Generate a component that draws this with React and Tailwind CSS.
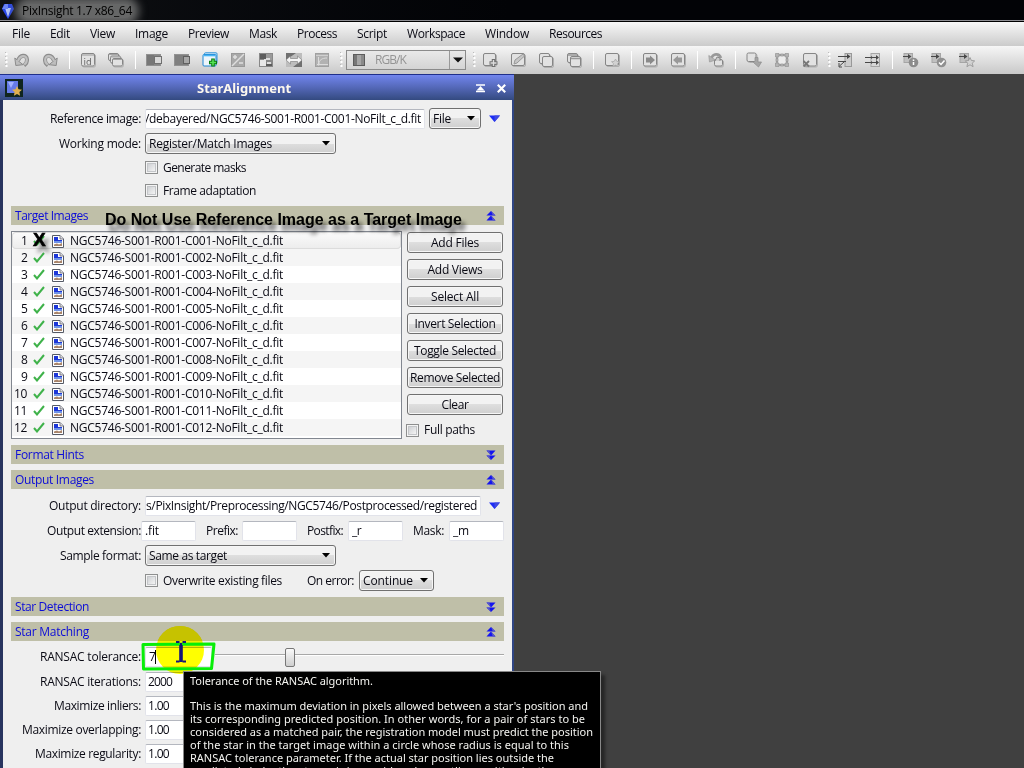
import React, { useLayoutEffect, useRef } from "react";

/* Text run spaced to occupy a given width in pixels. */
function T({ w, children, className = "" }) {
  const ref = useRef(null);
  useLayoutEffect(() => {
    const el = ref.current;
    el.style.letterSpacing = "0px";
    const natural = el.getBoundingClientRect().width;
    el.style.letterSpacing = `${(w - natural) / children.length}px`;
  }, [w, children]);
  return (
    <span ref={ref} className={`inline-block whitespace-pre shrink-0 ${className}`}>
      {children}
    </span>
  );
}

const MENU = [
  ["File", 18], ["Edit", 20], ["View", 25], ["Image", 33], ["Preview", 41], ["Mask", 28],
  ["Process", 40], ["Script", 30], ["Workspace", 58], ["Window", 44], ["Resources", 53],
];

const sheet = (x, y, w, h, key) => (
  <g key={key}>
    <rect x={x + 1} y={y + 1} width={w} height={h} rx="1.5" fill="none" stroke="#b0b0b0" />
    <rect x={x} y={y} width={w} height={h} rx="1.5" fill="#e2e2e2" stroke="#868686" />
  </g>
);
const UNDO = (
  <g>
    <path d="M4 8.500C6 2.500 12.500 2 13 7.500c.2 2.500-1 4.500-3 6" fill="none" stroke="#8c8c8c" strokeWidth="4" />
    <path d="M.8 6l1 7.500 7.200-.8z" fill="#bdbdbd" stroke="#8c8c8c" strokeLinejoin="round" />
    <path d="M4 9C6 3 12.500 2.500 12.800 7.500c.1 2.300-1 4-2.600 5.200" fill="none" stroke="#c0c0c0" strokeWidth="2.200" />
  </g>
);

const ICONS = {
  undo: UNDO,
  redo: <g transform="translate(16 0) scale(-1 1)">{UNDO}</g>,
  id: (
    <g>
      {sheet(1.500, 1.500, 13, 12.500)}
      <path d="M2 3h12" stroke="#999" />
      <text x="3.400" y="12.500" fontSize="9" fill="#666" fontFamily="DejaVu Sans">id</text>
    </g>
  ),
  copies: <g>{sheet(0.500, 1.500, 10, 7)}{sheet(2.500, 4, 10, 7)}{sheet(4.500, 6.500, 10, 7.500)}<path d="M1 2.500h9M3 5h9M5 7.500h9" stroke="#a5a5a5" /></g>,
  monoA: <g><rect x=".5" y="2.500" width="14" height="11" fill="#888" stroke="#909090" /><rect x="1" y="3" width="7" height="10" fill="#777" /><rect x="8.500" y="4.500" width="7" height="7" fill="#d8d8d8" stroke="#707070" /></g>,
  monoB: <g><rect x=".5" y="2.500" width="14" height="11" fill="#808080" stroke="#929292" /><rect x="9.500" y="4.500" width="6" height="7" fill="#a8a8a8" stroke="#606060" /></g>,
  newwin: (
    <g>
      <rect x="2.500" y=".8" width="12.500" height="11" rx="1" fill="#d6ebfa" stroke="#2d91d8" />
      <rect x="1" y="2.500" width="13" height="11.500" rx="1" fill="#edf5fb" stroke="#1f86d2" />
      <path d="M1.500 3.500h12" stroke="#48b5f5" strokeWidth="1.600" />
      <path d="M11 6.500v8M7 10.500h8" stroke="#087a12" strokeWidth="3.600" />
      <path d="M11 7.500v6M8 10.500h6" stroke="#55e355" strokeWidth="1.600" />
    </g>
  ),
  diag: <g><rect x="1.500" y="1.500" width="13" height="13" fill="#a9a9a9" stroke="#999" /><path d="M2 14L14 2" stroke="#dedede" strokeWidth="1.500" /><path d="M3 5h4M5 3v4M9 11h4" stroke="#e0e0e0" strokeWidth="1.500" fill="none" /></g>,
  blocks: <g><rect x="1.500" y="1.500" width="13" height="13" fill="#888" stroke="#888" /><path d="M2 8h6v6H2z" fill="#e8e8e8" /><path d="M8 2h6v6H8z" fill="#9a9a9a" /><path d="M6 6h6v2H6zM9 10h4v2H9z" fill="#ddd" /><path d="M2 2h6v5H2zM8 12h6v2H8z" fill="#5c5c5c" /></g>,
  expand: <g><rect x="0" y="1" width="16" height="14" fill="#bdbdbd" /><path d="M0 1h10L0 8zM16 15H7l9-7z" fill="#707070" /><path d="M0 8l4.500-4v2.500h7V4L16 8l-4.500 4V9.500h-7V12z" fill="#f5f5f5" stroke="#777" strokeWidth=".6" /></g>,
  curve: <g><rect x="1.500" y="1.500" width="13" height="13" fill="#b2b2b2" stroke="#a0a0a0" /><path d="M2 3.500h12" stroke="#d0d0d0" /><path d="M4.500 5v8.500M3 12.500h11M5 12c0-4 3-6 8-6" stroke="#dcdcdc" fill="none" /></g>,
  sheetPlus: <g>{sheet(1.500, 1.500, 12, 12)}<path d="M11.500 7v8M7.500 11h8" stroke="#707070" strokeWidth="3.500" /><path d="M11.500 8v6M8.500 11h6" stroke="#ddd" strokeWidth="1.400" /></g>,
  sheetPen: <g>{sheet(1.500, 1.500, 13, 12)}<path d="M4 12l1-4 8-6 1.500 2-7.500 7z" fill="#c6c6c6" stroke="#999" /></g>,
  twoSheets: <g>{sheet(1.500, 1.500, 10, 10)}{sheet(4.500, 4.500, 10, 10)}</g>,
  twoWins: <g>{sheet(1.500, 1.500, 10, 9)}{sheet(4.500, 4.500, 10, 10)}<path d="M2 3h9M5 6.500h9" stroke="#999" strokeWidth="1.500" /></g>,
  sheetStar: <g>{sheet(1.500, 1.500, 13, 12)}<path d="M11.500 7l1.300 2.400 2.700.3-2 1.900.6 2.900-2.600-1.300-2.600 1.300.6-2.900-2-1.900 2.700-.3z" fill="#d2d2d2" stroke="#aaa" strokeWidth=".8" /></g>,
  right: <g>{sheet(1.500, 1.500, 13, 12.500)}<path d="M4 5.500h4V3.500L13 8l-5 4.500v-2H4z" fill="#8a8a8a" /></g>,
  left: <g>{sheet(1.500, 1.500, 13, 12.500)}<path d="M12 5.500H8V3.500L3 8l5 4.500v-2h4z" fill="#999" /></g>,
  revert: <g><path d="M3 7c2-6 8-6 10-1" fill="none" stroke="#999" strokeWidth="2.600" /><path d="M.8 3.500l.7 6.500 6-2z" fill="#b5b5b5" stroke="#999" strokeWidth=".7" />{sheet(6.500, 7.500, 8, 6.500)}<path d="M7 9l2-4 3 1v3" fill="#ccc" stroke="#888" /></g>,
  dragDown: <g>{sheet(1, 1, 9, 8.500)}<path d="M9 5.500h3V10h3.500l-3 5-5-4.500L9 9z" fill="#a5a5a5" stroke="#909090" strokeWidth=".8" /></g>,
  handles: <g><rect x="3" y="3" width="10" height="10" fill="#ececec" stroke="#a8a8a8" strokeWidth="2" /><path d="M1.500 1.500h3.500v3.500H1.500zM11 1.500h3.500v3.500H11zM1.500 11h3.500v3.500H1.500zM11 11h3.500v3.500H11zM6.500 2h3v2h-3zM6.500 12h3v2h-3zM2 6.500h2v3H2zM12 6.500h2v3h-2z" fill="#b5b5b5" stroke="#939393" strokeWidth=".7" /></g>,
  sheetX: <g>{sheet(1.500, 1.500, 13, 12.500)}<path d="M1.500 9l5.500 5.500M7 9l-5.500 5.500" stroke="#777" strokeWidth="1.800" /></g>,
  arrowsA: <g><rect x="8" y="1.500" width="6.500" height="13" fill="#ccc" stroke="#999" /><path d="M1 4.500h10M1 9.500h8M7 10L2.500 14M2 11v4h3" stroke="#484848" fill="none" /><path d="M10 2l3.500 2.500L10 7z" fill="#444" /></g>,
  arrowsB: <g><rect x="6" y="1.500" width="8.500" height="13" fill="#d8d8d8" stroke="#a5a5a5" /><path d="M0 5.500h12M0 10.500h12" stroke="#484848" /><path d="M11 3L14 5.500 11 8zM11 8l3 2.500L11 13zM6 4L8 5.500 6 7zM6 9L8 10.500 6 12z" fill="#484848" /></g>,
};
const infoBase = (
  <g>
    <rect x="1" y="1.500" width="8.500" height="9" fill="#c0c0c0" stroke="#a5a5a5" />
    <path d="M0 4.500h6" stroke="#484848" />
    <path d="M5 2l3.500 2.500L5 7z" fill="#484848" />
  </g>
);
ICONS.info = <g>{infoBase}<circle cx="10.500" cy="10.500" r="4.800" fill="#8c8c8c" /><path d="M10.500 7.500v1.500M10.500 10v3" stroke="#fff" strokeWidth="1.500" /></g>;
ICONS.ok = <g>{infoBase}<circle cx="10.500" cy="10.500" r="4.800" fill="#909090" /><path d="M8 10.500l2 2 3.500-4" stroke="#fff" strokeWidth="1.500" fill="none" /></g>;
ICONS.star = <g>{infoBase}<path d="M11 5.500l1.400 3 3.300.3-2.400 2.400.8 3.500-3.100-1.900L7.900 14.700l.8-3.500L6.300 8.800l3.300-.3z" fill="#d2d2d2" stroke="#909090" strokeWidth=".8" /></g>;

function Tool({ name }) {
  return (
    <div className="flex w-7 shrink-0 items-center justify-center">
      <svg width="16" height="16" viewBox="0 0 16 16">{ICONS[name]}</svg>
    </div>
  );
}
const Sep = () => (
  <div className="flex w-2.5 shrink-0 items-center justify-center pl-px">
    <div className="h-[18px] w-px bg-white" />
  </div>
);
const Grip = ({ className = "w-2.5" }) => (
  <div className={`flex shrink-0 items-center justify-center ${className}`}>
    <svg width="3" height="16"><path d="M1.500 1v15" stroke="#fff" strokeWidth="2" strokeDasharray="2 2" /><path d="M.5 0v15" stroke="#bbb" strokeDasharray="1 3" /></svg>
  </div>
);
const Tools = ({ names }) => names.map((n) => <Tool key={n} name={n} />);

function Toolbar() {
  return (
    <div className="flex h-7 items-stretch bg-linear-to-b from-[#f6f6f6] to-[#c9c9c9]">
      <Grip className="w-2 pl-1" />
      <Tools names={["undo", "redo"]} />
      <Sep />
      <Tools names={["id", "copies"]} />
      <Sep />
      <Tools names={["monoA", "monoB", "newwin", "diag", "blocks", "expand", "curve"]} />
      <Grip />
      <div className="mt-1 flex h-5 w-[120px] shrink-0 items-center border border-[#8b8b8b] bg-linear-to-b from-[#e9e9e9] to-[#d4d4d4]">
        <div className="ml-1.5 flex h-3 w-3 border border-[#5c5c5c] bg-[#8a8a8a]">
          <div className="w-[3px] bg-[#777]" />
          <div className="w-[4px] bg-[#a5a5a5]" />
        </div>
        <div className="ml-2.5 flex-1 text-[#949494]"><T w={31}>RGB/K</T></div>
        <div className="flex h-full w-4 items-center justify-center border-l border-[#999]">
          <svg width="10" height="6"><path d="M0 .5h10L5 5.500z" fill="#111" /></svg>
        </div>
      </div>
      <Grip className="w-2.5 pl-1.5" />
      <Tools names={["sheetPlus", "sheetPen", "twoSheets", "twoWins"]} />
      <Sep />
      <Tool name="sheetStar" />
      <Sep />
      <Tools names={["right", "left"]} />
      <Sep />
      <Tool name="revert" />
      <Sep />
      <Tools names={["dragDown", "handles", "sheetX"]} />
      <Grip className="w-[7px] pl-1" />
      <Tools names={["arrowsA", "arrowsB"]} />
      <Sep />
      <Tools names={["info", "ok", "star"]} />
    </div>
  );
}

function Section({ title, w, open, className = "" }) {
  return (
    <div className={`flex h-[19px] shrink-0 items-center justify-between bg-[#bfbfa8] pl-1 pr-2 text-[#0c0cd8] ${className}`}>
      <T w={w}>{title}</T>
      <svg width="10" height="10" viewBox="0 0 10 11" className={open ? "" : "rotate-180"}>
        <path d="M0 5L5 0l5 5z" fill="#1414f0" />
        <path d="M0 10.500L5 5l5 5.500z" fill="#1414f0" />
        <path d="M5 0l5 5H7zM5 5l5 5.500H7z" fill="#5a5ac8" />
      </svg>
    </div>
  );
}

const Label = ({ w, children }) => (
  <div className="flex w-[130px] shrink-0 justify-end"><T w={w}>{children}</T></div>
);
const Check = ({ w, children, className = "" }) => (
  <div className={`flex items-center ${className}`}>
    <div className="mr-[5px] h-[13px] w-[13px] shrink-0 border border-[#8e8f8f] bg-[#f4f4f4] p-px">
      <div className="h-full w-full border border-[#c4c6c9] bg-linear-to-br from-[#cfd1d4] to-[#f4f4f4]" />
    </div>
    <T w={w}>{children}</T>
  </div>
);
const Field = ({ className = "", children }) => (
  <div className={`flex h-5 shrink-0 items-center overflow-hidden rounded-[2px] border border-[#e2e3ea] border-t-[#b4b7bf] bg-white ${className}`}>{children}</div>
);
const BTN = "flex h-[21px] shrink-0 items-center rounded-[3px] border border-[#707070] bg-linear-to-b from-[#f2f2f2] from-50% via-[#dedede] via-50% to-[#cfcfcf] shadow-[inset_0_0_0_1px_#f6f6f6]";
const Combo = ({ w, className = "", children }) => (
  <div className={`${BTN} justify-between pl-[3px] pr-[5px] ${className}`}>
    <T w={w}>{children}</T>
    <svg width="8" height="5"><path d="M0 0h8L4 4.500z" fill="#000" /></svg>
  </div>
);
const BlueArrow = () => (
  <svg className="ml-2" width="11" height="8"><path d="M0 .5h11L5.500 7z" fill="#1c2cf5" /><path d="M5.500 .5H11L5.500 7z" fill="#3f49e0" /></svg>
);

const BUTTONS = [
  ["Add Files", 48], ["Add Views", 55], ["Select All", 48], ["Invert Selection", 81],
  ["Toggle Selected", 82], ["Remove Selected", 90], ["Clear", 27],
];

function FileRow({ n }) {
  const id = String(n).padStart(3, "0");
  const tone = n === 1 ? "bg-linear-to-b from-[#fbfbfb] to-[#ececec] rounded-sm shadow-[inset_0_0_0_1px_#dcdcdc]" : n % 2 ? "bg-white" : "bg-[#f5f5f5]";
  return (
    <div className={`flex h-[17px] items-center ${tone}`}>
      <div className="flex w-[15px] justify-end"><T w={n > 9 ? 13 : 6}>{String(n)}</T></div>
      <svg className="ml-1.5" width="12" height="11"><path d="M1 6l3 3.500L11 1" fill="none" stroke="#3fb24a" strokeWidth="2" /></svg>
      <svg className="ml-1.5" width="14" height="14" viewBox="0 0 14 14">
        <path d="M1.500 1.500h7.500l3.500 3.500v8.500h-11z" fill="#fff" stroke="#555a66" />
        <path d="M9 1.500V5h3.500" fill="#ddd" stroke="#667" strokeWidth=".8" />
        <path d="M3 3h4v3h4v3H3z" fill="#1c36d8" />
        <path d="M3 7h8v2H3z" fill="#6f93e6" />
        <path d="M3 10.500l3-1 2 1 3-1.500v3H3z" fill="#a8846a" />
      </svg>
      <T w={213} className="ml-[5px]">{`NGC5746-S001-R001-C${id}-NoFilt_c_d.fit`}</T>
    </div>
  );
}

const TIP = [
  ["Tolerance of the RANSAC algorithm.", 183],
  ["", 0],
  ["This is the maximum deviation in pixels allowed between a star's position and", 398],
  ["its corresponding predicted position. In other words, for a pair of stars to be", 395],
  ["considered as a matched pair, the registration model must predict the position", 403],
  ["of the star in the target image within a circle whose radius is equal to this", 379],
  ["RANSAC tolerance parameter. If the actual star position lies outside the", 364],
  ["predicted circle, the star pair is considered an outlier position by the", 365],
];

function StarAlignment() {
  return (
    <div className="flex h-[694px] w-[514px] flex-col overflow-hidden">
      <div className="flex h-[26px] shrink-0 items-center border-t border-[#20308a] bg-linear-to-b from-[#7286ee] via-[#5468b8] to-[#344a80] pt-px">
        <svg className="ml-[5px]" width="18" height="18" viewBox="0 0 18 18">
          <rect width="18" height="18" fill="#10251f" />
          <path d="M2 2h11v12H2z" fill="#667be8" />
          <path d="M3 3h6l-3 6z" fill="#a2b2ff" />
          <path d="M12 7l1.500 3.300 3.500.4-2.600 2.400.7 3.700-3.100-1.900-3.100 1.900.7-3.700L7 10.700l3.500-.4z" fill="#e0b050" />
        </svg>
        <div className="flex flex-1 justify-center pr-[11px] text-[13px] font-bold text-[#fdf8ee]"><T w={94} className="font-['Noto_Sans',sans-serif]">StarAlignment</T></div>
        <svg className="mr-3" width="9" height="9"><path d="M0 1h9M0 7.500h9" stroke="#fff" strokeWidth="1.600" /><path d="M4.500 2l4 4.500h-8z" fill="#fff" /></svg>
        <svg className="mr-2" width="9" height="9"><path d="M.8 .8l7.400 7.400M8.200 .8L.8 8.200" stroke="#fff" strokeWidth="2.200" /></svg>
      </div>

      <div className="flex flex-1 flex-col border-l-[3px] border-r-2 border-l-[#28345f] border-r-[#2f4583] bg-[#efefef] px-2 pt-1.5">
        <div className="flex h-[25px] items-center">
          <Label w={91}>Reference image:</Label>
          <Field className="ml-1 w-[280px] justify-end pr-[3px]"><T w={276}>/debayered/NGC5746-S001-R001-C001-NoFilt_c_d.fit</T></Field>
          <Combo w={18} className="ml-1 w-[52px]">File</Combo>
          <BlueArrow />
        </div>
        <div className="flex h-[25px] items-center">
          <Label w={82}>Working mode:</Label>
          <Combo w={123} className="ml-1 w-[191px]">Register/Match Images</Combo>
        </div>
        <Check w={83} className="ml-[134px] h-[23px]">Generate masks</Check>
        <Check w={93} className="ml-[134px] h-[23px]">Frame adaptation</Check>

        <Section title="Target Images" w={73} open className="mt-1" />

        <div className="mt-1.5 flex h-[208px] shrink-0">
          <div className="w-[391px] border border-[#828790] bg-white">
            {Array.from({ length: 12 }, (_, i) => <FileRow key={i} n={i + 1} />)}
          </div>
          <div className="ml-[5px] mt-px flex flex-col gap-1.5">
            {BUTTONS.map(([t, w]) => (
              <div key={t} className={`${BTN} w-24 justify-center`}><T w={w}>{t}</T></div>
            ))}
            <Check w={51} className="-ml-px mt-px">Full paths</Check>
          </div>
        </div>

        <Section title="Format Hints" w={69} className="mt-1.5" />
        <Section title="Output Images" w={79} open className="mt-1.5" />

        <div className="mt-1 flex h-[25px] items-center">
          <Label w={92}>Output directory:</Label>
          <Field className="ml-1 w-[336px] justify-end pr-[3px]"><T w={331}>s/PixInsight/Preprocessing/NGC5746/Postprocessed/registered</T></Field>
          <BlueArrow />
        </div>
        <div className="flex h-[25px] items-center">
          <Label w={94}>Output extension:</Label>
          <Field className="w-[55px] pl-[3px]"><T w={14}>.fit</T></Field>
          <T w={32} className="ml-2.5">Prefix:</T>
          <Field className="ml-1 w-[55px]" />
          <T w={36} className="ml-2.5">Postfix:</T>
          <Field className="ml-[5px] w-[55px] pl-[3px]"><T w={9}>_r</T></Field>
          <T w={31} className="ml-2.5">Mask:</T>
          <Field className="ml-[5px] w-[55px] pl-[3px]"><T w={16}>_m</T></Field>
        </div>
        <div className="flex h-[25px] items-center">
          <Label w={81}>Sample format:</Label>
          <Combo w={78} className="ml-1 w-[191px]">Same as target</Combo>
        </div>
        <div className="flex h-[25px] items-center">
          <Check w={119} className="ml-[134px]">Overwrite existing files</Check>
          <T w={47} className="ml-[25px]">On error:</T>
          <Combo w={50} className="ml-[5px] w-[75px]">Continue</Combo>
        </div>

        <Section title="Star Detection" w={74} className="mt-1" />
        <Section title="Star Matching" w={74} open className="mt-1.5" />

        <div className="mt-1 flex h-6 items-center">
          <Label w={101}>RANSAC tolerance:</Label>
          <Field className="ml-1 w-[67px] pl-[3px]"><T w={6}>7</T><div className="h-3.5 w-px bg-black" /></Field>
          <div className="ml-[3px] flex h-5 w-[289px] items-center">
            <div className="-mt-1 h-0.5 w-[70px] border-t border-[#a8a8a8] bg-white" />
            <div className="h-[19px] w-[10px] rounded-[2px] border border-[#777] bg-linear-to-b from-[#fafafa] to-[#cfcfcf]" />
            <div className="-mt-1 h-0.5 flex-1 border-t border-[#a8a8a8] bg-white" />
          </div>
        </div>
        <div className="flex h-[25px] items-center">
          <Label w={101}>RANSAC iterations:</Label>
          <Field className="ml-1 w-[67px] pl-[2px]"><T w={24}>2000</T></Field>
        </div>
        {[["Maximize inliers:", 87], ["Maximize overlapping:", 119], ["Maximize regularity:", 106]].map(([t, w]) => (
          <div key={t} className="flex h-6 items-center">
            <Label w={w}>{t}</Label>
            <Field className="ml-1 w-[67px] pl-[2px]"><T w={21}>1.00</T></Field>
          </div>
        ))}
      </div>
    </div>
  );
}

export default function App() {
  return (
    <div className="relative h-[768px] w-[1024px] overflow-hidden bg-[#404040] font-['Open_Sans','Noto_Sans',sans-serif] text-[12px] leading-[16px] text-[#0a0a14]">
      <div className="flex h-[22px] items-center overflow-hidden border-b border-black bg-linear-to-r from-[#101113] via-[#020306] to-[#020306] shadow-[inset_0_-1px_0_#8f8f94]">
        <svg className="ml-[2px]" width="12" height="16" viewBox="0 0 12 16">
          <path d="M2 1h8l2 5-6 10L0 6z" fill="#2b48e6" />
          <path d="M3 5h6l-3 9z" fill="#b8c9fb" />
          <path d="M3 1h3v5L0 6z" fill="#6d86f5" />
        </svg>
        <div className="ml-2 h-3.5 rounded-full bg-[#666767] leading-3.5 text-black shadow-[0_0_9px_7px_#666767]">
          <T w={110}>PixInsight 1.7 x86_64</T>
        </div>
      </div>
      <div className="flex h-6 items-center gap-5 bg-linear-to-b from-[#f8f8f8] to-[#cbcbcb] pl-3">
        {MENU.map(([t, w]) => <T key={t} w={w}>{t}</T>)}
      </div>
      <Toolbar />
      <StarAlignment />

      {/* Instructor's annotations */}
      <div className="absolute left-[105px] top-[210px] font-['Liberation_Sans',sans-serif] text-[16px] font-bold leading-5 text-black [text-shadow:4px_6px_4px_rgba(0,0,0,0.65)]">
        <T w={357}>Do Not Use Reference Image as a Target Image</T>
      </div>
      <div className="absolute left-[33px] top-[230px] font-['Liberation_Sans',sans-serif] text-[19px] font-bold leading-5 text-black [-webkit-text-stroke:0.6px_black] [text-shadow:4px_6px_4px_rgba(0,0,0,0.6)]">X</div>
      <div className="absolute left-[156px] top-[626px] h-12 w-12 rounded-full bg-[#ffff00] mix-blend-multiply" />
      <div className="absolute left-[156px] top-[626px] h-[15px] w-12 overflow-hidden">
        <div className="h-12 w-12 rounded-full bg-[#c6c200]" />
      </div>
      <svg className="absolute left-[138px] top-[638px]" width="80" height="36">
        <path d="M5 6.500L76 6l-2.500 24.500L5.500 31z" fill="none" stroke="#08ee08" strokeWidth="3" strokeLinejoin="round" />
        <path d="M38 4h3.500M44.500 4H48M43 5v17M38 23.500h3.500M44.500 23.500H48" stroke="#15157a" strokeWidth="2" />
        <path d="M43 7v17" stroke="#15157a" strokeWidth="3.600" />
      </svg>
      <div className="absolute left-[183px] top-[671px] h-[97px] w-[418px] overflow-hidden border-l border-r border-t border-[#888] bg-black pl-1.5 pt-[2px] font-['Noto_Sans',sans-serif] text-[11px] text-[#f4f4f0] shadow-[4px_4px_3px_#262626]">
        {TIP.map(([t, w], i) => (
          <div key={i} className={i === 1 ? "h-3" : "flex h-[13px] items-center"}>{t && <T w={w}>{t}</T>}</div>
        ))}
      </div>
    </div>
  );
}
